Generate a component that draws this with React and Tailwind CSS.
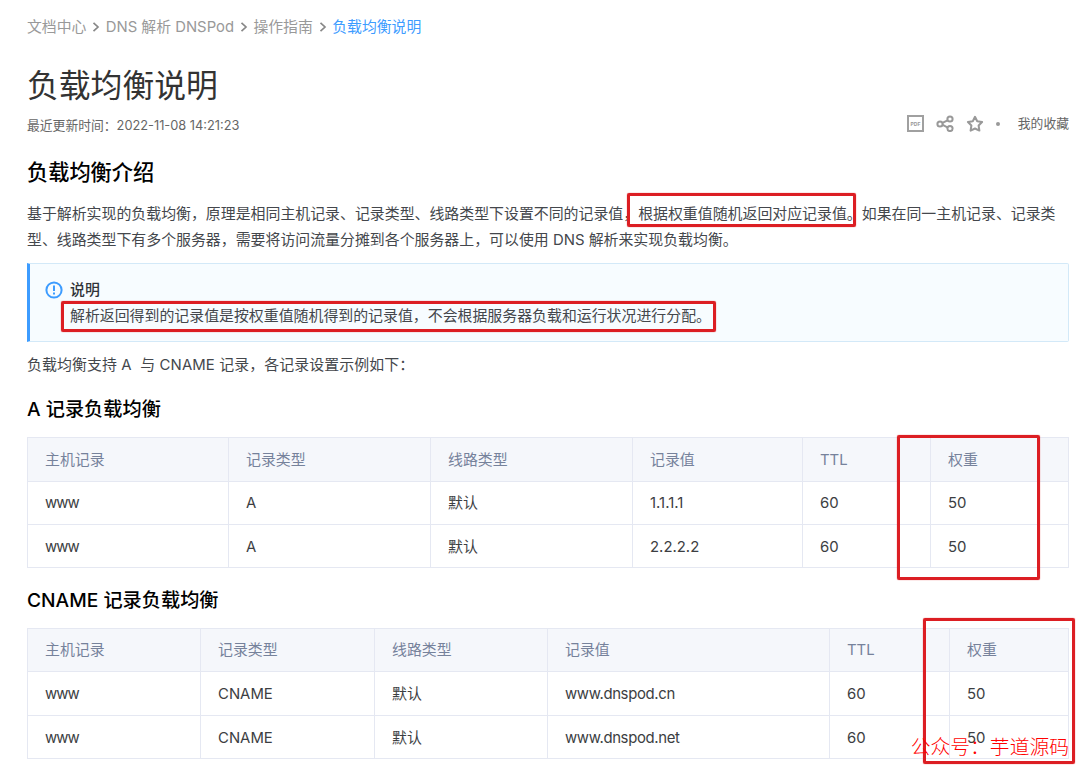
import React from 'react';
import clsx from 'clsx';

const crumbs = ['文档中心', 'DNS 解析 DNSPod', '操作指南', '负载均衡说明'];

const headers = ['主机记录', '记录类型', '线路类型', '记录值', 'TTL', '权重'];

const aRecords = [
    ['www', 'A', '默认', '1.1.1.1', '60', '50'],
    ['www', 'A', '默认', '2.2.2.2', '60', '50'],
];

const cnameRecords = [
    ['www', 'CNAME', '默认', 'www.dnspod.cn', '60', '50'],
    ['www', 'CNAME', '默认', 'www.dnspod.net', '60', '50'],
];

const Chevron = () => (
    <svg width="8" height="12" viewBox="0 0 8 12" fill="none" stroke="#888" strokeWidth="1.7">
        <path d="M1.5 1.8L6 6L1.5 10.2" />
    </svg>
);

// Red marker frame, always laid over the content it points at
const Marker = ({ className }) => (
    <div className={clsx('absolute border-[3px] border-[#dc1e23] rounded-[2px] shadow-[0_0_1px_#dc1e23] pointer-events-none', className)} />
);

const RecordTable = ({ cols, rowHeights, rows }) => (
    <table className="w-[1042px] table-fixed border-separate border-spacing-0 border-r border-b border-[#e5e8f2] leading-5">
        <colgroup>
            {cols.map((c, i) => <col key={i} className={c} />)}
        </colgroup>
        <thead>
            <tr className={clsx('bg-[#f5f7fb] text-[#76829b]', rowHeights[0])}>
                {headers.map((h) => (
                    <th key={h} className="border-l border-t border-[#e5e8f2] pl-[17px] py-0 text-left font-normal">{h}</th>
                ))}
            </tr>
        </thead>
        <tbody>
            {rows.map((row, i) => (
                <tr key={i} className={clsx('text-[#3c3e42]', rowHeights[i + 1])}>
                    {row.map((cell, j) => (
                        <td
                            key={j}
                            className={clsx(
                                'border-l border-t border-[#e5e8f2] pl-[17px] pb-0',
                                i === rows.length - 1 ? 'pt-[2px]' : 'pt-0',
                                cell === 'www' && 'tracking-[-0.9px]',
                                cell.startsWith('www.') && 'tracking-[-0.35px]'
                            )}
                        >
                            {cell}
                        </td>
                    ))}
                </tr>
            ))}
        </tbody>
    </table>
);

const App = () => {
    return (
        <div className="relative w-[1080px] h-[767px] overflow-hidden bg-white pl-[27px] pr-[11px] font-[Inter,'Noto_Sans_CJK_SC',sans-serif] text-[14.92px] text-[#44474c]">
            {/* Breadcrumb */}
            <nav className="flex items-center h-[54px] text-[14.85px] text-[#999]">
                {crumbs.map((c, i) => (
                    <React.Fragment key={c}>
                        {i > 0 && <span className="w-[19.4px] flex justify-center"><Chevron /></span>}
                        <span className={clsx('whitespace-nowrap', i === crumbs.length - 1 && 'text-[#3d9cff]')}>{c}</span>
                    </React.Fragment>
                ))}
            </nav>

            {/* Title */}
            <h1 className="h-[62px] leading-[64px] text-[31.8px] text-[#333]">负载均衡说明</h1>
            <div className="flex items-center justify-between h-[18px] text-[12.8px] text-[#666]">
                <span className="pt-px">最近更新时间：2022-11-08 14:21:23</span>
                <div className="flex items-center -mt-[3px]">
                    <svg width="17" height="17" viewBox="0 0 17 17">
                        <rect x="1" y="1" width="15" height="15" fill="none" stroke="#a0a0a0" strokeWidth="2" />
                        <text x="8.5" y="10.5" textAnchor="middle" fontSize="5" fontWeight="700" fill="#999" fontFamily="Inter">PDF</text>
                    </svg>
                    <svg className="ml-3" width="19" height="17" viewBox="0 0 19 17" fill="none" stroke="#999" strokeWidth="2">
                        <circle cx="4" cy="9" r="2.6" />
                        <circle cx="14" cy="4" r="2.6" />
                        <circle cx="14" cy="13.5" r="2.6" />
                        <path d="M6.5 7.8L11.5 5.3M6.7 9.8L11.4 12.3" />
                    </svg>
                    <svg className="ml-[11px]" width="18" height="18" viewBox="0 0 18 18" fill="none" stroke="#999" strokeWidth="2" strokeLinejoin="round">
                        <path d="M9 1.8L11.2 6.2L16.1 7L12.6 10.5L13.4 15.6L9 13.5L4.6 15.6L5.4 10.5L1.9 7L6.8 6.2Z" />
                    </svg>
                    <span className="ml-3 mr-[18px] w-1 h-1 rounded-full bg-[#999]" />
                    <span>我的收藏</span>
                </div>
            </div>

            {/* Intro */}
            <h2 className="mt-[22px] h-[32px] leading-[32px] text-[21.2px] font-medium text-black">负载均衡介绍</h2>
            <div className="relative mt-[13px] leading-[26px]">
                <p className="whitespace-nowrap">基于解析实现的负载均衡，原理是相同主机记录、记录类型、线路类型下设置不同的记录值，根据权重值随机返回对应记录值。如果在同一主机记录、记录类</p>
                <p>型、线路类型下有多个服务器，需要将访问流量分摊到各个服务器上，可以使用 DNS 解析来实现负载均衡。</p>
                <Marker className="left-[600px] top-[-8px] w-[229px] h-[34px]" />
            </div>

            {/* Note */}
            <div className="relative mt-[10px] h-[79px] border border-l-[3px] border-[#d3e9f8] border-l-[#3d9cff] rounded-r-[2px] bg-[#f7fcff] pt-[13px] pl-[15px] leading-[26px]">
                <div className="flex items-center">
                    <svg width="18" height="18" viewBox="0 0 18 18" fill="none" stroke="#3d9cff" strokeWidth="2">
                        <circle cx="9" cy="9" r="7.6" />
                        <path d="M9 4.6V10M9 11.6V13.4" />
                    </svg>
                    <span className="ml-[7px] font-medium text-[#2f3338]">说明</span>
                </div>
                <p className="pl-[25px]">解析返回得到的记录值是按权重值随机得到的记录值，不会根据服务器负载和运行状况进行分配。</p>
                <Marker className="left-[31px] top-[37px] w-[655px] h-[31px]" />
            </div>

            <p className="mt-[10px] h-[26px] leading-[26px] whitespace-pre tracking-[0.1px]">负载均衡支持 A  与 CNAME 记录，各记录设置示例如下：</p>

            {/* A records */}
            <h3 className="mt-[16px] h-[30px] leading-[30px] text-[19.2px] font-medium text-black">A 记录负载均衡</h3>
            <div className="relative mt-[13px]">
                <RecordTable
                    cols={['w-[201px]', 'w-[202px]', 'w-[202px]', 'w-[170px]', 'w-[128px]', 'w-[138px]']}
                    rowHeights={['h-[44px]', 'h-[43px]', 'h-[43px]']}
                    rows={aRecords}
                />
                <Marker className="left-[870px] top-[-2px] w-[143px] h-[145px]" />
            </div>

            {/* CNAME records */}
            <h3 className="mt-[17px] h-[30px] leading-[30px] text-[19.2px] font-medium text-black">CNAME 记录负载均衡</h3>
            <div className="relative mt-[13px]">
                <RecordTable
                    cols={['w-[173px]', 'w-[174px]', 'w-[173px]', 'w-[282px]', 'w-[120px]', 'w-[119px]']}
                    rowHeights={['h-[43px]', 'h-[44px]', 'h-[43px]']}
                    rows={cnameRecords}
                />
                <Marker className="left-[896px] top-[-10px] w-[152px] h-[146px]" />
            </div>

            <div className="absolute right-[11px] bottom-[6px] text-[19.8px] leading-[28px] font-light text-[#ff0000]">公众号：芋道源码</div>
        </div>
    );
};

export default App;
